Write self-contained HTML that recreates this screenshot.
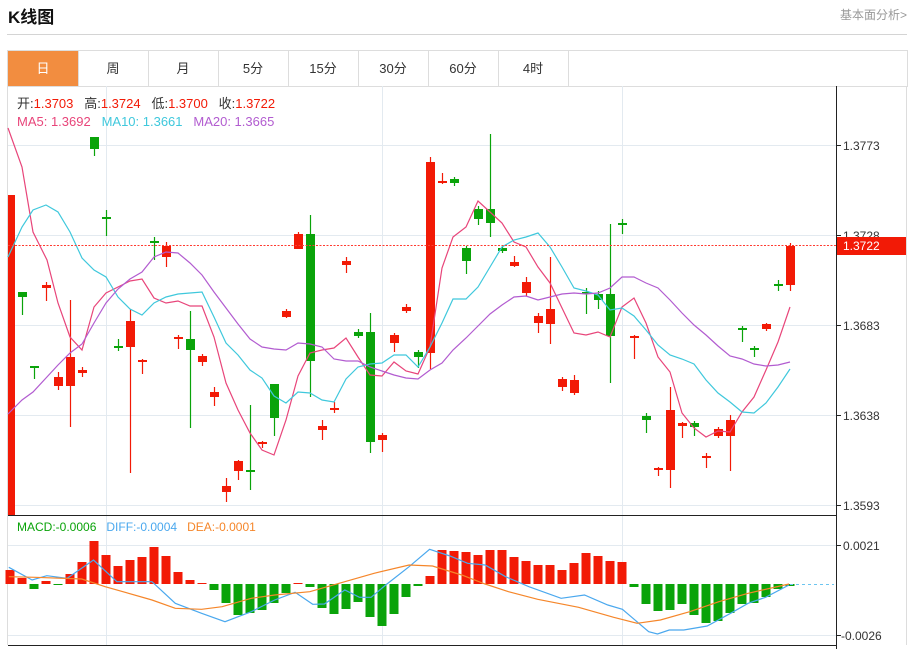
<!DOCTYPE html>
<html><head><meta charset="utf-8">
<style>
body{margin:0;background:#fff;width:915px;height:649px;overflow:hidden;font-family:"Liberation Sans","Noto Sans CJK SC",sans-serif;position:relative}
.t{position:absolute;left:8px;top:3px;font-size:17px;font-weight:bold;color:#111}
.r{position:absolute;right:8px;top:6px;font-size:12px;color:#999}
.hl{position:absolute;left:7px;top:34px;width:900px;height:1px;background:#d4d4d4}
.tabs{position:absolute;left:7px;top:50px;width:899px;height:35px;border:1px solid #ddd;border-bottom:1px solid #ddd}
.tab{position:absolute;top:0;height:35px;width:70px;border-right:1px solid #ddd;text-align:center;line-height:35px;font-size:13px;color:#333}
.tab.on{background:#f28d40;color:#fff}
svg{position:absolute;left:0;top:0}
</style></head><body>
<div class="t">K线图</div>
<div class="r">基本面分析&gt;</div>
<div class="hl"></div>
<div class="tabs">
<div class="tab on" style="left:0">日</div>
<div class="tab" style="left:70px">周</div>
<div class="tab" style="left:140px">月</div>
<div class="tab" style="left:210px">5分</div>
<div class="tab" style="left:280px">15分</div>
<div class="tab" style="left:350px">30分</div>
<div class="tab" style="left:420px">60分</div>
<div class="tab" style="left:490px">4时</div>
</div>
<svg id="s" width="915" height="649" xmlns="http://www.w3.org/2000/svg" font-family="Liberation Sans, Noto Sans CJK SC, sans-serif">
<line x1="906.5" y1="86" x2="906.5" y2="645" stroke="#ddd"/>
<line x1="7.5" y1="86" x2="7.5" y2="645" stroke="#ddd"/>
<g stroke="#e3eaf0" stroke-width="1">
<line x1="8" y1="145.5" x2="836" y2="145.5"/><line x1="8" y1="235.5" x2="836" y2="235.5"/><line x1="8" y1="325.5" x2="836" y2="325.5"/><line x1="8" y1="415.5" x2="836" y2="415.5"/><line x1="8" y1="505.5" x2="836" y2="505.5"/>
<line x1="8" y1="545.5" x2="836" y2="545.5"/><line x1="8" y1="635.5" x2="836" y2="635.5"/>
<line x1="106.5" y1="86" x2="106.5" y2="645"/><line x1="382.5" y1="86" x2="382.5" y2="645"/><line x1="622.5" y1="86" x2="622.5" y2="645"/>
</g>
<g id="c"></g>
<line x1="8" y1="515.5" x2="837" y2="515.5" stroke="#222"/>
<line x1="8" y1="645.5" x2="837" y2="645.5" stroke="#222"/>
<line x1="836.5" y1="86" x2="836.5" y2="649" stroke="#222"/>
<g stroke="#222"><line x1="836" y1="145.5" x2="841" y2="145.5"/><line x1="836" y1="235.5" x2="841" y2="235.5"/><line x1="836" y1="325.5" x2="841" y2="325.5"/><line x1="836" y1="415.5" x2="841" y2="415.5"/><line x1="836" y1="505.5" x2="841" y2="505.5"/><line x1="836" y1="545.5" x2="841" y2="545.5"/><line x1="836" y1="635.5" x2="841" y2="635.5"/></g>
<g font-size="12" fill="#333">
<text x="843" y="150">1.3773</text><text x="843" y="240">1.3728</text><text x="843" y="330">1.3683</text><text x="843" y="420">1.3638</text><text x="843" y="510">1.3593</text>
<text x="843" y="550">0.0021</text><text x="841" y="640">-0.0026</text>
</g>
<line x1="8" y1="245.5" x2="836" y2="245.5" stroke="#ff3b30" stroke-dasharray="2,1.5"/>
<rect x="837" y="237" width="69" height="18" fill="#f21a06"/>
<text x="843" y="250" font-size="12" fill="#fff">1.3722</text>
<line x1="790" y1="584.5" x2="834" y2="584.5" stroke="#6cc5f0" stroke-dasharray="3,3"/>
<g font-size="13">
<text x="17" y="108" fill="#333" xml:space="preserve">开:<tspan fill="#f21a06">1.3703</tspan>   高:<tspan fill="#f21a06">1.3724</tspan>   低:<tspan fill="#f21a06">1.3700</tspan>   收:<tspan fill="#f21a06">1.3722</tspan></text>
<text x="17" y="126" fill="#e8457a" xml:space="preserve">MA5: 1.3692   <tspan fill="#3fc8dc">MA10: 1.3661</tspan>   <tspan fill="#b25cd0">MA20: 1.3665</tspan></text>
</g>
<text x="17" y="531" font-size="12" xml:space="preserve" fill="#0aa30a">MACD:-0.0006   <tspan fill="#4aa8ee">DIFF:-0.0004</tspan>   <tspan fill="#f5862a">DEA:-0.0001</tspan></text>
</svg>
<script>
var R="#f21a06",G="#0aa30a";
var K=[[R,195,515,195,515],[G,292,297,292,315],[G,367,367,366,379],[R,285,288,282,301],[R,377,386,372,390],[R,357,386,300,427],[R,370,373,367,377],[G,137,149,137,156],[G,218,218,210,236],[G,347,347,339,351],[R,321,347,309,473],[R,361,362,359,374],[G,242,242,237,260],[R,246,257,242,267],[R,338,340,335,349],[G,339,350,311,428],[R,356,362,354,366],[R,392,397,387,406],[R,486,492,478,502],[R,461,471,460,480],[G,471,473,405,490],[R,443,445,441,448],[G,384,418,384,436],[R,311,317,309,318],[R,234,249,232,249],[G,234,361,215,397],[R,426,430,420,440],[R,409,411,402,413],[R,261,265,257,273],[G,332,336,329,338],[G,332,442,313,453],[R,435,440,433,452],[R,335,343,333,352],[R,307,311,304,313],[G,352,357,350,368],[R,162,353,157,369],[R,182,182,173,184],[G,179,183,177,186],[G,248,261,246,274],[G,209,219,206,225],[G,209,223,134,237],[G,248,251,246,253],[R,262,266,256,267],[R,282,293,277,296],[R,316,323,313,333],[R,309,324,257,344],[R,379,387,377,391],[R,380,393,375,395],[G,293,293,288,314],[G,294,300,291,309],[G,294,336,224,383],[G,224,224,219,234],[R,337,339,335,359],[G,416,420,413,433],[R,469,469,467,476],[R,410,470,387,488],[R,423,426,422,438],[G,423,427,421,436],[R,457,457,453,468],[R,429,436,427,438],[R,420,436,415,471],[G,329,329,326,342],[G,349,349,346,357],[R,324,329,323,331],[G,285,285,280,291],[R,246,285,243,291]];
var M=[570,578,589,581,585,574,562,541,555,566,560,557,547,556,572,580,583,590,603,615,613,610,603,593,583,587,608,614,609,602,617,626,614,597,586,576,550,551,552,555,550,550,557,561,565,565,570,563,553,556,561,562,587,604,611,610,604,615,623,621,613,604,603,597,589,586];
var h="";
M.forEach(function(v,i){var x=10+12*i-4.5;var y=Math.min(v,584),hh=Math.max(1,Math.abs(v-584));h+='<rect x="'+x+'" y="'+y+'" width="9" height="'+hh+'" fill="'+(v<584?R:G)+'"/>';});
K.forEach(function(k,i){var x=10+12*i;h+='<line x1="'+(x+.5)+'" y1="'+k[3]+'" x2="'+(x+.5)+'" y2="'+k[4]+'" stroke="'+k[0]+'" stroke-width="1.2"/>';var bh=Math.max(2,k[2]-k[1]);var w=i==0?7:9;var bx=i==0?8:x-4;h+='<rect x="'+bx+'" y="'+(k[1]-(bh==2?1:0))+'" width="'+w+'" height="'+bh+'" fill="'+k[0]+'"/>';});
function pl(p,c){return '<polyline fill="none" stroke="'+c+'" stroke-width="1.2" points="'+p+'"/>';}
var ma5="8,128 22,167 33,232 47,260 58,303 70,337 82,350 94,307 106,293 118,287 130,281 142,279 154,298 166,303 178,301 190,306 202,306 214,337 226,383 238,410 250,433 262,450 274,455 286,420 298,376 310,353 322,350 334,348 346,338 358,357 370,375 382,376 394,362 406,371 418,374 430,347 442,268 453,237 466,227 478,201 490,212 502,223 514,242 526,247 538,267 550,283 562,308 574,333 586,335 598,332 610,337 622,307 634,298 646,323 658,357 670,372 682,413 694,428 706,437 718,431 730,432 742,412 754,397 766,370 778,342 790,307";
var ma10="8,257 22,227 33,210 46,205 58,212 70,232 82,258 94,270 106,277 118,297 130,309 142,315 154,303 166,297 178,294 190,293 202,292 214,317 226,343 238,355 250,370 262,378 274,396 286,403 298,392 310,393 322,400 334,402 346,379 358,367 370,364 382,363 394,355 406,355 418,367 430,347 442,323 453,299 466,299 478,287 490,267 502,247 514,240 526,237 538,233 550,247 562,267 574,288 586,291 598,295 610,310 622,308 634,316 646,330 658,345 670,355 682,359 694,364 706,380 718,393 730,402 742,412 754,413 766,403 778,387 790,369";
var ma20="8,414 22,400 33,392 46,378 58,365 70,353 82,344 94,323 106,303 118,289 130,279 142,272 154,257 166,252 178,253 190,263 202,275 214,292 226,308 238,324 250,339 262,347 274,349 286,350 298,343 310,344 322,347 334,359 346,361 358,361 370,367 382,371 394,375 406,378 418,379 430,370 442,363 453,350 466,338 478,326 490,314 502,305 514,297 526,296 538,300 550,297 562,294 574,293 586,294 598,293 610,288 622,277 634,277 646,283 658,288 670,300 682,313 694,325 706,335 718,346 730,356 742,359 754,364 766,366 778,365 790,362";
h+=pl(ma5,"#e8457a")+pl(ma10,"#3fc8dc")+pl(ma20,"#b25cd0");
function cv(a){return a.map(function(p){return (p[0]/1.711).toFixed(1)+","+(510+p[1]/3).toFixed(1);}).join(" ");}
var diff=[[15,172],[55,210],[80,197],[115,205],[160,150],[200,215],[260,215],[300,280],[345,310],[385,335],[430,305],[470,270],[505,247],[535,283],[555,282],[590,240],[615,262],[635,262],[660,225],[700,170],[735,118],[770,138],[800,160],[830,165],[865,200],[905,230],[960,265],[1000,255],[1040,285],[1065,298],[1110,365],[1125,372],[1145,360],[1170,360],[1210,348],[1250,310],[1280,280],[1310,262],[1350,225]];
var dea=[[15,200],[60,202],[140,207],[180,230],[260,270],[300,295],[345,298],[380,290],[430,265],[470,255],[530,245],[590,215],[640,190],[700,165],[740,168],[790,195],[830,222],[870,245],[920,268],[990,292],[1050,322],[1090,340],[1130,330],[1180,305],[1230,275],[1280,250],[1350,222]];
h+=pl(cv(diff),"#4aa8ee")+pl(cv(dea),"#f5862a");
document.getElementById("c").innerHTML=h;
</script>
</body></html>
